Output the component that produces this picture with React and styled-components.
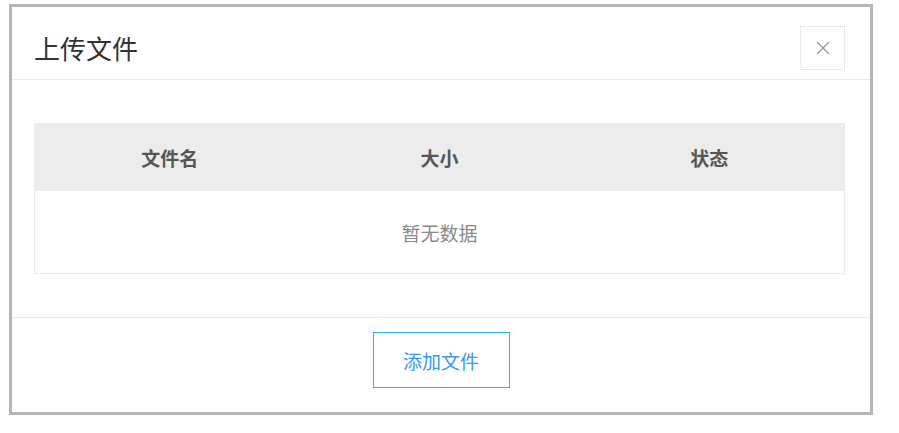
import React from "react";
import styled, { createGlobalStyle } from "styled-components";

const Global = createGlobalStyle`
  html, body { margin: 0; padding: 0; background: #ffffff; }
  body { font-family: "Noto Sans CJK SC", "Noto Sans", sans-serif; }
`;

const Page = styled.div`
  padding: 4px 0 0 9px;
`;

const Dialog = styled.div`
  box-sizing: border-box;
  width: 864px;
  height: 411px;
  border: 3px solid #b7b4b5;
  background: #fff;
  display: flex;
  flex-direction: column;
`;

const Header = styled.div`
  box-sizing: border-box;
  height: 73px;
  padding: 9px 25px 0 22px;
  display: flex;
  align-items: center;
  justify-content: space-between;
  border-bottom: 1px solid #e9e9ef;
`;

const Title = styled.h3`
  margin: 0;
  font-size: 26px;
  font-weight: 400;
  line-height: 26px;
  color: #333;
`;

const CloseButton = styled.button`
  box-sizing: border-box;
  width: 45px;
  height: 44px;
  padding: 0;
  background: #fff;
  border: 1px dotted #d6d6dc;
  display: flex;
  align-items: center;
  justify-content: center;
  cursor: pointer;
`;

const Body = styled.div`
  padding: 43px 25px 43px 22px;
`;

const Table = styled.div`
  border: 1px solid #ebebeb;
  border-top: none;
`;

const HeadRow = styled.div`
  display: grid;
  grid-template-columns: repeat(3, 1fr);
  height: 68px;
  background: #ececec;
  align-items: center;
`;

const HeadCell = styled.div`
  text-align: center;
  font-size: 19px;
  font-weight: 700;
  color: #555;
`;

const EmptyRow = styled.div`
  height: 82px;
  display: flex;
  align-items: center;
  justify-content: center;
  font-size: 19px;
  color: #888;
`;

const Footer = styled.div`
  flex: 1;
  border-top: 1px solid #e9e9ef;
  display: flex;
  justify-content: center;
  align-items: flex-start;
  padding-top: 14px;
`;

const AddButton = styled.button`
  box-sizing: border-box;
  width: 137px;
  height: 56px;
  background: #fff;
  border: 1.5px solid #33aef2;
  color: #3a98ee;
  font-family: "Noto Sans CJK SC", "Noto Sans", sans-serif;
  font-size: 19px;
  cursor: pointer;
`;

export default function App() {
  return (
    <>
      <Global />
      <Page>
        <Dialog>
          <Header>
            <Title>上传文件</Title>
            <CloseButton aria-label="close">
              <svg width="14" height="14" viewBox="0 0 14 14">
                <path d="M1 1 L13 13 M13 1 L1 13" stroke="#9a9a9a" strokeWidth="1.4" fill="none" />
              </svg>
            </CloseButton>
          </Header>
          <Body>
            <Table>
              <HeadRow>
                <HeadCell>文件名</HeadCell>
                <HeadCell>大小</HeadCell>
                <HeadCell>状态</HeadCell>
              </HeadRow>
              <EmptyRow>暂无数据</EmptyRow>
            </Table>
          </Body>
          <Footer>
            <AddButton>添加文件</AddButton>
          </Footer>
        </Dialog>
      </Page>
    </>
  );
}
